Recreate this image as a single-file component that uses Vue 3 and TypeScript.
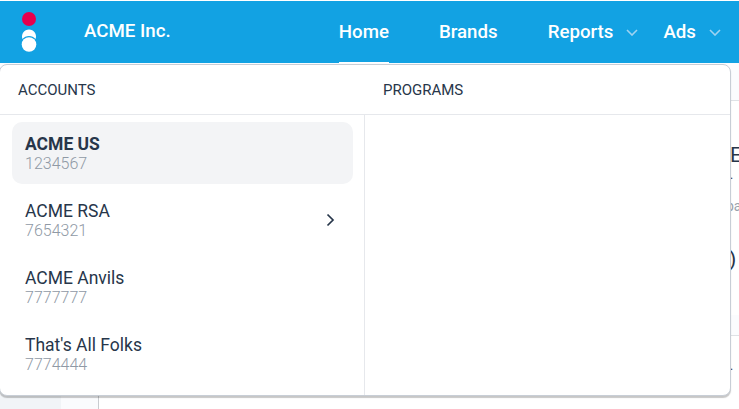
<script setup lang="ts">
interface Account { name: string; id: string; active?: boolean; more?: boolean }
const accounts: Account[] = [
  { name: 'ACME US', id: '1234567', active: true },
  { name: 'ACME RSA', id: '7654321', more: true },
  { name: 'ACME Anvils', id: '7777777' },
  { name: "That's All Folks", id: '7774444' },
]
interface NavItem { label: string; current?: boolean; menu?: boolean }
const nav: NavItem[] = [
  { label: 'Home', current: true },
  { label: 'Brands' },
  { label: 'Reports', menu: true },
  { label: 'Ads', menu: true },
]
</script>

<template>
  <div class="page">
    <header class="topbar">
      <div class="brand">
        <svg class="logo" width="16" height="40" viewBox="0 0 16 40" aria-hidden="true">
          <circle cx="8" cy="7" r="7" fill="#e6004c" />
          <path d="M1.470 27A7 7 0 1 1 14.530 27A8.500 8.500 0 0 0 1.470 27Z" fill="#fff" />
          <circle cx="8" cy="32.500" r="7.300" fill="#fff" />
        </svg>
        <span class="brand-name">ACME Inc.</span>
      </div>
      <nav class="nav">
        <a v-for="item in nav" :key="item.label" class="nav-item" :class="{ current: item.current, menu: item.menu }">
          <span>{{ item.label }}</span>
          <svg v-if="item.menu" class="caret" width="12" height="7" viewBox="0 0 12 7" aria-hidden="true">
            <path d="M1 1l5 5 5-5" fill="none" stroke="#9fd3f1" stroke-width="1.6" />
          </svg>
        </a>
      </nav>
    </header>

    <div class="behind">
      <div class="subbar"></div>
      <div class="workspace">
        <aside class="rail"></aside>
        <aside class="rail2"></aside>
        <main class="main">
          <div class="card">
            <div class="peek big">E</div>
            <div class="peek dot">.</div>
            <div class="peek small">pa</div>
            <div class="peek big paren">)</div>
          </div>
          <div class="band"></div>
          <div class="peek dot lower">.</div>
        </main>
      </div>
    </div>

    <section class="dropdown">
      <div class="heads">
        <div class="head accounts-head">ACCOUNTS</div>
        <div class="head">PROGRAMS</div>
      </div>
      <div class="columns">
        <ul class="accounts">
          <li v-for="a in accounts" :key="a.id" class="account" :class="{ active: a.active }">
            <div class="account-text">
              <div class="account-name">{{ a.name }}</div>
              <div class="account-id">{{ a.id }}</div>
            </div>
            <svg v-if="a.more" class="chevron" width="9" height="14" viewBox="0 0 9 14" aria-hidden="true">
              <path d="M1.500 1.500L7 7l-5.500 5.500" fill="none" stroke="#27364a" stroke-width="1.700" />
            </svg>
          </li>
        </ul>
        <div class="programs"></div>
      </div>
    </section>
  </div>
</template>

<style>
html, body { margin: 0; background: #fff; overflow: hidden; }
</style>

<style scoped>
.page {
  position: relative;
  width: 739px;
  height: 409px;
  overflow: hidden;
  font-family: Roboto, "Liberation Sans", sans-serif;
  color: #27364a;
  background: #fff;
  display: flex;
  flex-direction: column;
}
.topbar {
  margin-top: 1px;
  height: 62px;
  flex: none;
  background: #12a2e3;
  display: flex;
  align-items: stretch;
  justify-content: space-between;
  color: #fff;
}
.brand { display: flex; align-items: center; }
.logo { margin-left: 21px; }
.brand-name { margin-left: 47px; font-size: 18.700px; font-weight: 500; margin-top: -2px; }
.nav { display: flex; align-items: stretch; }
.nav-item {
  margin-right: 50px;
  display: flex;
  align-items: center;
  font-size: 18.700px;
  font-weight: 500;
  box-sizing: border-box;
  padding-top: 1px;
  border-bottom: 2px solid transparent;
  height: 63px;
}
.nav-item.current { border-bottom-color: #fff; }
.nav-item.menu { margin-right: 25px; }
.nav-item.menu:last-child { margin-right: 18px; }
.caret { margin-left: 13px; }
.behind { flex: 1; display: flex; flex-direction: column; min-height: 0; }
.subbar {
  height: 37px;
  flex: none;
  background: #fbfcfe;
  border-bottom: 1px solid #dfe2e6;
}
.workspace { flex: 1; display: flex; min-height: 0; }
.rail { width: 61px; background: #f1f4f7; flex: none; }
.rail2 { width: 37px; background: #fafbfd; border-right: 1px solid #c9ccd0; flex: none; }
.main { flex: 1; display: flex; flex-direction: column; padding-left: 631px; min-width: 0; overflow: hidden; }
.card { height: 214px; flex: none; display: flex; flex-direction: column; }
.peek { white-space: nowrap; line-height: 1; }
.big { font-size: 21px; margin-top: 44px; }
.dot { font-size: 12px; margin-top: 3px; color: #27364a; }
.small { font-size: 14px; color: #9aa3ad; margin-top: 18px; margin-left: -4px; }
.paren { margin-top: 36px; margin-left: -1px; color: #27364a; }
.band { height: 20px; flex: none; background: #fbfcfe; border-bottom: 1px solid #dfe2e6; }
.lower { margin-top: 24px; }
.dropdown {
  position: absolute;
  left: -1px;
  top: 64px;
  width: 732px;
  height: 332px;
  box-sizing: border-box;
  background: #fff;
  border: 1px solid #c8ced6;
  border-radius: 8px;
  box-shadow: 0 2px 1px rgba(0, 0, 0, 0.22);
  display: flex;
  flex-direction: column;
}
.heads {
  display: flex;
  height: 49px;
  flex: none;
  align-items: center;
  border-bottom: 1px solid #e6e8ec;
}
.head { font-size: 15px; color: #27364a; padding-left: 18px; }
.accounts-head { width: 347px; }
.columns { flex: 1; display: flex; min-height: 0; }
.accounts {
  list-style: none;
  margin: 0;
  width: 365px;
  flex: none;
  box-sizing: border-box;
  padding: 7px 11px 0 12px;
  border-right: 1px solid #e6e8ec;
  display: flex;
  flex-direction: column;
  gap: 5px;
}
.account {
  height: 62px;
  box-sizing: border-box;
  padding: 0 14px 0 13px;
  border-radius: 10px;
  display: flex;
  align-items: center;
  justify-content: space-between;
}
.account.active { background: #f3f4f6; }
.account-name { font-size: 17.500px; line-height: 20px; color: #27364a; }
.active .account-name { font-weight: 700; }
.account-id { font-size: 16px; line-height: 19px; font-weight: 300; color: #8f99a5; }
.chevron { margin-right: 4px; }
.programs { flex: 1; }
</style>
